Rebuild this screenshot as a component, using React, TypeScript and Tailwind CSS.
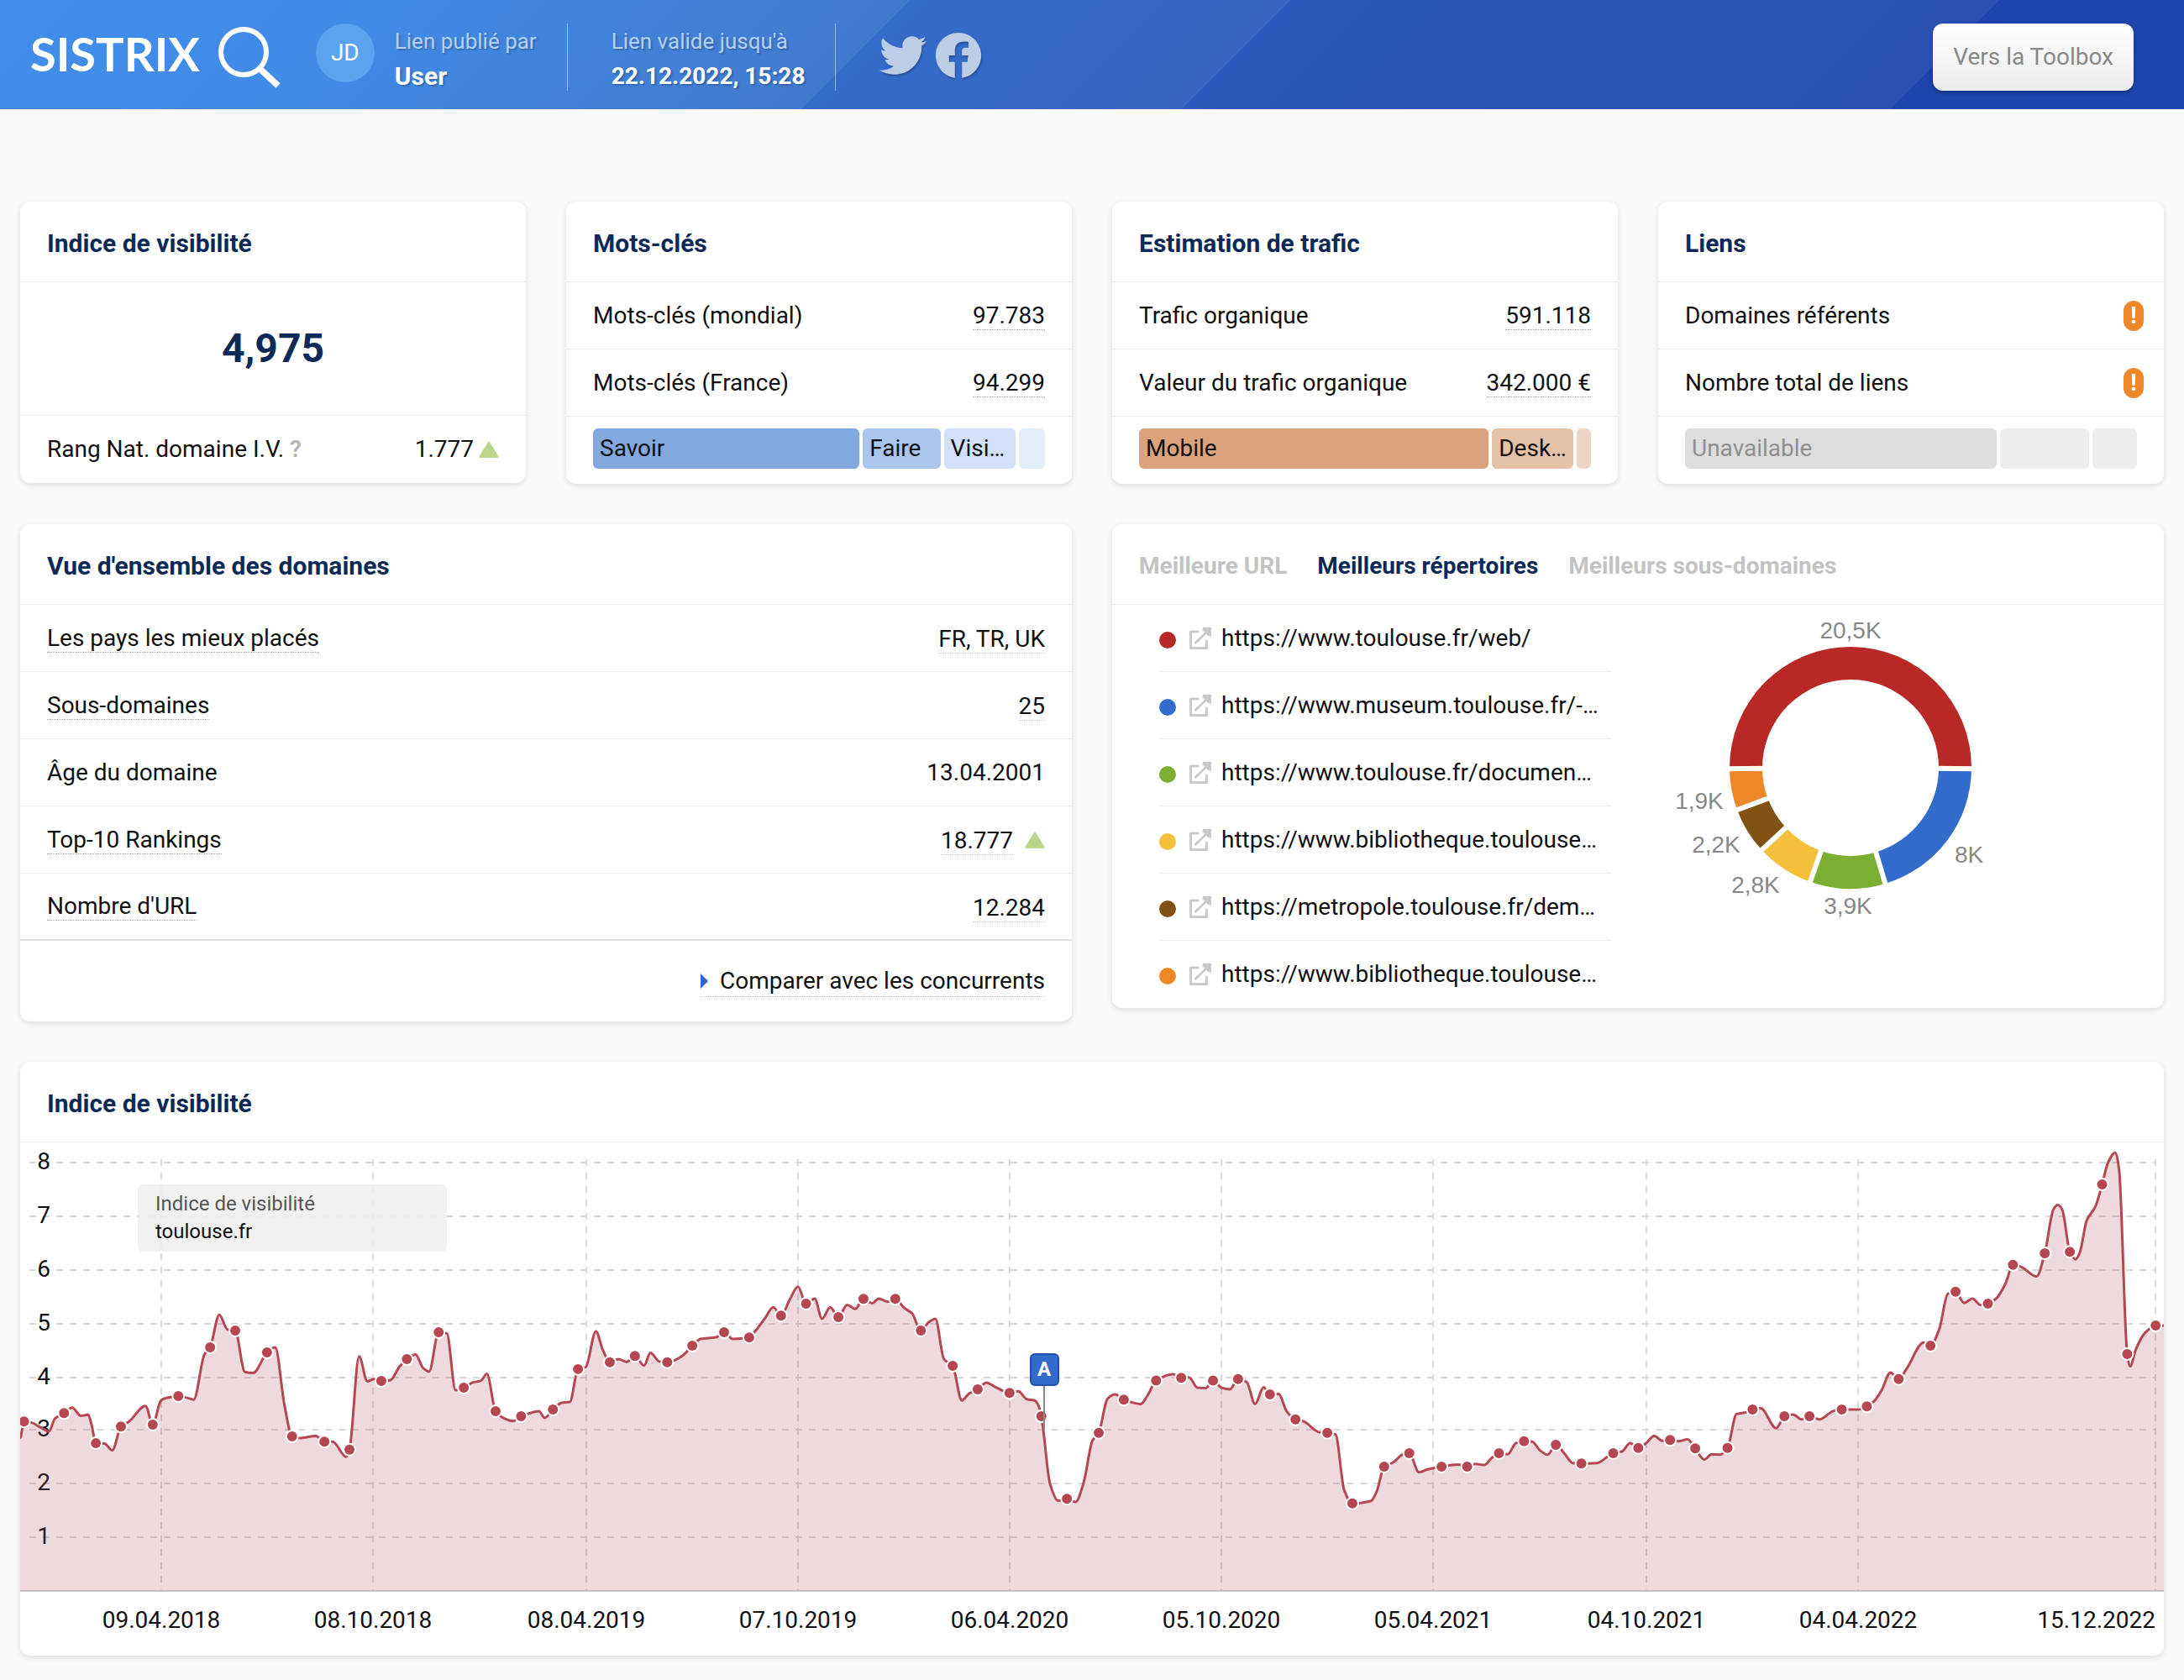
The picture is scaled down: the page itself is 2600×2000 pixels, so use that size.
import type { ReactNode } from "react";
import { FaFacebook, FaTwitter } from "react-icons/fa";

type Row = { label: string; value: string; trend?: boolean; plain?: boolean };
type Segment = { label: string; grow: number; color: string };

const keywordRows: Row[] = [
  { label: "Mots-clés (mondial)", value: "97.783" },
  { label: "Mots-clés (France)", value: "94.299" },
];

const keywordSegments: Segment[] = [
  { label: "Savoir", grow: 316, color: "bg-[#81a9e0]" },
  { label: "Faire", grow: 92, color: "bg-[#abc6ec]" },
  { label: "Visi…", grow: 85, color: "bg-[#d1e0f6]" },
  { label: "", grow: 31, color: "bg-[#e2ecfa]" },
];

const trafficRows: Row[] = [
  { label: "Trafic organique", value: "591.118" },
  { label: "Valeur du trafic organique", value: "342.000 €" },
];

const trafficSegments: Segment[] = [
  { label: "Mobile", grow: 417, color: "bg-[#dba27e]" },
  { label: "Desk…", grow: 97, color: "bg-[#e5c1a8]" },
  { label: "", grow: 17, color: "bg-[#ecd5c5]" },
];

const linkSegments: Segment[] = [
  { label: "Unavailable", grow: 371, color: "bg-[#dddddd] text-[#8f8f8f]" },
  { label: "", grow: 106, color: "bg-[#ededed]" },
  { label: "", grow: 53, color: "bg-[#ededed]" },
];

const domainRows: Row[] = [
  { label: "Les pays les mieux placés", value: "FR, TR, UK" },
  { label: "Sous-domaines", value: "25" },
  { label: "Âge du domaine", value: "13.04.2001", plain: true },
  { label: "Top-10 Rankings", value: "18.777", trend: true },
  { label: "Nombre d'URL", value: "12.284" },
];

const directories = [
  { url: "https://www.toulouse.fr/web/", dot: "bg-[#b82826]" },
  { url: "https://www.museum.toulouse.fr/-…", dot: "bg-[#326bcb]" },
  { url: "https://www.toulouse.fr/documen…", dot: "bg-[#7bae31]" },
  { url: "https://www.bibliotheque.toulouse…", dot: "bg-[#f4c03b]" },
  { url: "https://metropole.toulouse.fr/dem…", dot: "bg-[#825114]" },
  { url: "https://www.bibliotheque.toulouse…", dot: "bg-[#ed8728]" },
];

// angles are clockwise degrees from twelve o'clock
const slices = [
  { from: -90.5, to: 90.5, color: "#b82826", label: "20,5K", x: 253, y: 40 },
  { from: 90.5, to: 163.3, color: "#326bcb", label: "8K", x: 394, y: 307 },
  { from: 163.3, to: 199.5, color: "#7bae31", label: "3,9K", x: 250, y: 368 },
  { from: 199.5, to: 227.2, color: "#f4c03b", label: "2,8K", x: 140, y: 343 },
  { from: 227.2, to: 249.6, color: "#825114", label: "2,2K", x: 93, y: 295 },
  { from: 249.6, to: 269.5, color: "#ed8728", label: "1,9K", x: 73, y: 243 },
];

// [time, level, 1 when the point has a marker]
const series: number[][] = [
  [42, 978], [50, 937, 1], [66, 940], [84, 952], [102, 962], [114, 930], [133, 916, 1], [150, 902], [168, 923], [183, 920],
  [190, 945], [199, 992, 1], [217, 993], [233, 1010], [251, 950, 1], [268, 937], [302, 898], [317, 945, 1], [334, 884], [345, 878],
  [370, 873, 1], [387, 877], [402, 882], [424, 768], [436, 750, 1], [455, 668], [472, 705], [488, 708, 1], [508, 812], [525, 815],
  [554, 763, 1], [571, 750], [590, 895], [606, 975, 1], [622, 979], [655, 974], [673, 988, 1], [690, 988], [718, 1026], [725, 1008, 1],
  [745, 773], [762, 836], [775, 830], [791, 835, 1], [810, 833], [828, 800], [844, 780, 1], [862, 768], [878, 803], [890, 811],
  [910, 712, 1], [927, 715], [945, 858], [962, 852, 1], [980, 839], [998, 834], [1010, 817], [1028, 911, 1], [1047, 930], [1064, 936],
  [1081, 924, 1], [1118, 911], [1130, 928], [1147, 907, 1], [1165, 890], [1182, 888], [1199, 805, 1], [1215, 800], [1236, 710], [1250, 755],
  [1265, 788, 1], [1283, 780], [1300, 787], [1317, 772, 1], [1336, 796], [1349, 764], [1368, 786], [1384, 788, 1], [1415, 772], [1436, 746, 1],
  [1453, 729], [1485, 725], [1502, 712, 1], [1520, 729], [1554, 725, 1], [1566, 710], [1586, 678], [1604, 649], [1620, 670, 1], [1638, 630],
  [1655, 597], [1672, 640, 1], [1690, 627], [1705, 678], [1722, 649], [1739, 674, 1], [1757, 643], [1774, 653], [1791, 628, 1], [1809, 639],
  [1823, 627], [1841, 635], [1857, 628, 1], [1875, 650], [1892, 665], [1910, 708, 1], [1926, 687], [1940, 678], [1958, 780], [1976, 797, 1],
  [1995, 884], [2010, 867], [2028, 856, 1], [2046, 839], [2064, 850], [2094, 865, 1], [2112, 861], [2130, 881], [2146, 884], [2154, 897],
  [2160, 924, 1], [2178, 1095], [2195, 1137], [2213, 1132, 1], [2231, 1140], [2248, 1090], [2266, 985], [2279, 966, 1], [2297, 880], [2313, 869],
  [2331, 882, 1], [2366, 893], [2380, 872], [2398, 834, 1], [2433, 818], [2450, 827, 1], [2466, 826], [2484, 852], [2501, 853], [2516, 834, 1],
  [2534, 852], [2551, 856], [2568, 830, 1], [2586, 838], [2603, 893], [2621, 851], [2634, 869, 1], [2652, 868], [2669, 912], [2687, 932, 1],
  [2704, 937], [2736, 964], [2753, 966, 1], [2770, 970], [2788, 1110], [2805, 1144, 1], [2843, 1138], [2855, 1115], [2871, 1051, 1], [2890, 1040],
  [2910, 1020], [2923, 1017, 1], [2943, 1065], [2961, 1058], [2990, 1051, 1], [3023, 1046], [3043, 1051, 1], [3060, 1044], [3078, 1047], [3095, 1028],
  [3109, 1017, 1], [3127, 1020], [3144, 992], [3161, 987, 1], [3178, 988], [3194, 1010], [3210, 1021], [3227, 996, 1], [3246, 1020], [3262, 1042],
  [3280, 1043, 1], [3312, 1042], [3346, 1017, 1], [3364, 1013], [3381, 992], [3398, 1004, 1], [3414, 992], [3431, 974], [3448, 986], [3464, 984, 1],
  [3482, 987], [3500, 982], [3516, 1005, 1], [3535, 1033], [3550, 1020], [3567, 1021], [3583, 1004, 1], [3602, 918], [3618, 915], [3635, 907, 1],
  [3652, 904], [3684, 954], [3701, 924, 1], [3719, 920], [3737, 932], [3753, 924, 1], [3774, 932], [3802, 911], [3820, 907, 1], [3854, 907],
  [3872, 899, 1], [3887, 886], [3902, 860], [3921, 814], [3938, 830, 1], [3954, 805], [3990, 738], [4004, 746, 1], [4022, 705], [4040, 615],
  [4056, 610, 1], [4074, 638], [4091, 627], [4108, 643], [4123, 640, 1], [4142, 625], [4160, 588], [4175, 542, 1], [4192, 547], [4224, 571],
  [4241, 513, 1], [4259, 402], [4268, 391], [4277, 402], [4293, 509, 1], [4305, 528], [4314, 510], [4328, 430], [4346, 395], [4360, 339, 1],
  [4372, 285], [4387, 259], [4395, 300], [4412, 767, 1], [4418, 798], [4430, 755], [4448, 715], [4471, 695, 1], [4490, 695],
];

const yTicks = [
  { label: "8", y: 24 },
  { label: "7", y: 88 },
  { label: "6", y: 152 },
  { label: "5", y: 216 },
  { label: "4", y: 280 },
  { label: "3", y: 342 },
  { label: "2", y: 406 },
  { label: "1", y: 470 },
];

const xTicks = [
  { label: "09.04.2018", x: 168 },
  { label: "08.10.2018", x: 420 },
  { label: "08.04.2019", x: 674 },
  { label: "07.10.2019", x: 926 },
  { label: "06.04.2020", x: 1178 },
  { label: "05.10.2020", x: 1430 },
  { label: "05.04.2021", x: 1682 },
  { label: "04.10.2021", x: 1936 },
  { label: "04.04.2022", x: 2188 },
  { label: "15.12.2022", x: 2542 },
];

const BASELINE = 534;

const points = series.map(([t, level, marker]) => ({
  x: (t - 42) * 0.574,
  y: level * 0.4719 - 110,
  marker: marker === 1,
}));

// cubic curve that keeps every peak at its data point
const buildLine = () => {
  const slopes = points.map((p, i) => {
    if (i === 0 || i === points.length - 1) return 0;
    const a = points[i - 1];
    const b = points[i + 1];
    const s0 = (p.y - a.y) / (p.x - a.x);
    const s1 = (b.y - p.y) / (b.x - p.x);
    if (s0 * s1 <= 0) return 0;
    return (2 * s0 * s1) / (s0 + s1);
  });

  return points.reduce((d, p, i) => {
    if (i === 0) return `M${p.x.toFixed(1)} ${p.y.toFixed(1)}`;
    const prev = points[i - 1];
    const h = (p.x - prev.x) / 3;
    const c = [prev.x + h, prev.y + slopes[i - 1] * h, p.x - h, p.y - slopes[i] * h, p.x, p.y];
    return d + "C" + c.map((n) => n.toFixed(1)).join(" ");
  }, "");
};

const line = buildLine();

const polar = (angle: number, r: number) => {
  const rad = (angle * Math.PI) / 180;
  return [253 + r * Math.sin(rad), 194 - r * Math.cos(rad)];
};

const slicePath = (from: number, to: number) => {
  const large = to - from > 180 ? 1 : 0;
  const [x0, y0] = polar(from, 144);
  const [x1, y1] = polar(to, 144);
  const [x2, y2] = polar(to, 105);
  const [x3, y3] = polar(from, 105);
  return `M${x0} ${y0}A144 144 0 ${large} 1 ${x1} ${y1}L${x2} ${y2}A105 105 0 ${large} 0 ${x3} ${y3}Z`;
};

const Card = ({ children }: { children: ReactNode }) => (
  <section className="overflow-hidden rounded-xl bg-white shadow-[0_2px_6px_rgba(0,0,0,0.12)]">
    {children}
  </section>
);

const CardTitle = ({ children }: { children: ReactNode }) => (
  <h2 className="flex h-24 items-center border-b border-[#ececec] px-8 pt-1 text-[30px] font-bold text-[#0d2957]">
    {children}
  </h2>
);

const TrendUp = () => (
  <svg viewBox="0 0 24 20" className="h-5 w-6" aria-hidden="true">
    <path d="M11 1.2Q12 -.4 13 1.2L23.4 18Q24 20 22 20H2Q0 20 .6 18Z" fill="#bcd58b" />
  </svg>
);

const ExternalIcon = () => (
  <svg viewBox="0 0 26 26" className="size-[26px] shrink-0" fill="none" stroke="#cacaca" strokeWidth="3" aria-hidden="true">
    <path d="M11 5H1.5V24.5H20.5V15" strokeLinejoin="round" />
    <path d="M6.5 19L22 4" />
    <path d="M16 0H26V10.5H22.8L15.6 3.2Z" fill="#cacaca" stroke="none" />
  </svg>
);

const StatRow = ({ label, children }: { label: string; children: ReactNode }) => (
  <div className="flex h-20 items-center justify-between border-b border-[#ececec] px-8">
    <dt>{label}</dt>
    <dd>{children}</dd>
  </div>
);

const StatLink = ({ children }: { children: ReactNode }) => (
  <a href="#" className="border-b border-dotted border-[#aaaaaa]">
    {children}
  </a>
);

const SegmentBar = ({ segments }: { segments: Segment[] }) => (
  <div className="flex h-20 gap-1 px-8 pt-3.5">
    {segments.map((s, i) => (
      <div
        key={i}
        className={`h-12 min-w-0 basis-0 overflow-hidden rounded-md leading-12 whitespace-nowrap ${s.color}`}
        style={{ flexGrow: s.grow }}
      >
        <span className="ml-2">{s.label}</span>
      </div>
    ))}
  </div>
);

const Header = () => (
  <header className="flex h-[130px] items-start bg-[linear-gradient(135deg,#418de9_0%,#418be7_16%,#4279ce_39.7%,#346cca_39.7%,#3765c1_56.3%,#2a5abb_56.3%,#2b50b2_87.2%,#1d44ab_87.2%,#1c45ad_100%)] pt-7 pr-15 pl-9 text-white">
    <a href="#" className="flex items-start font-[Lato,sans-serif] text-[56px] leading-[72px] font-bold">
      SISTRIX
      <svg viewBox="0 0 78 78" className="ml-5 size-[78px]" fill="none" stroke="#ffffff" aria-label="Rechercher">
        <circle cx="32" cy="34" r="27" strokeWidth="6" />
        <path d="M50.5 53L73 74" strokeWidth="7.5" />
      </svg>
    </a>
    <div className="ml-10 flex size-[70px] items-center justify-center rounded-full bg-[#5ba3ee]">JD</div>
    <div className="ml-6 h-20 border-r border-white/50 pr-9 leading-[42px] text-shadow-[2px_2px_2px_rgba(0,0,0,0.2)]">
      <p className="text-[26px] text-[#b3d0f5]">Lien publié par</p>
      <p className="text-[30px] font-bold">User</p>
    </div>
    <div className="ml-13 h-20 border-r border-white/50 pr-9 leading-[42px] text-shadow-[2px_2px_2px_rgba(0,0,0,0.2)]">
      <p className="text-[26px] text-[#b3d0f5]">Lien valide jusqu'à</p>
      <p className="text-[28px] font-bold">22.12.2022, 15:28</p>
    </div>
    <nav className="mt-2.5 ml-13 flex gap-2.5 text-[56px] text-[#bdcde6] drop-shadow-[1px_2px_1px_rgba(0,0,0,0.25)]">
      <a href="#" aria-label="Twitter">
        <FaTwitter />
      </a>
      <a href="#" aria-label="Facebook">
        <FaFacebook />
      </a>
    </nav>
    <button className="ml-auto h-20 rounded-xl bg-linear-to-b from-white to-[#ececec] px-6 text-[#888888] shadow-[0_2px_4px_rgba(0,0,0,0.3)]">
      Vers la Toolbox
    </button>
  </header>
);

const VisibilityCard = () => (
  <Card>
    <CardTitle>Indice de visibilité</CardTitle>
    <p className="flex h-[159px] items-center justify-center border-b border-[#ececec] text-5xl font-bold text-[#0d2957]">
      4,975
    </p>
    <div className="flex h-20 items-center justify-between px-8">
      <span>
        Rang Nat. domaine I.V. <b className="text-[#b5b5b5]">?</b>
      </span>
      <span className="flex items-center gap-1.5">
        1.777 <TrendUp />
      </span>
    </div>
  </Card>
);

const WarningBadge = () => (
  <svg viewBox="0 0 24 36" className="-mr-2 h-9 w-6" role="img" aria-label="Indisponible">
    <rect width="24" height="36" rx="12" fill="#ed8728" />
    <path d="M9.8 7h4.4l-.5 14h-3.4z" fill="#ffffff" />
    <circle cx="12" cy="25" r="2.3" fill="#ffffff" />
  </svg>
);

const DomainCard = () => (
  <Card>
    <CardTitle>Vue d'ensemble des domaines</CardTitle>
    <dl>
      {domainRows.map((row) => (
        <div
          key={row.label}
          className="flex h-20 items-center justify-between border-b border-[#ececec] px-8 last:border-b-2 last:border-[#dddddd]"
        >
          <dt>{row.plain ? row.label : <StatLink>{row.label}</StatLink>}</dt>
          <dd className="flex items-center gap-3.5">
            {row.plain ? (
              row.value
            ) : (
              <a href="#" className="mt-1 border-b border-dotted border-[#cccccc] leading-8">
                {row.value}
              </a>
            )}
            {row.trend && <TrendUp />}
          </dd>
        </div>
      ))}
    </dl>
    <div className="flex h-24 items-center justify-end px-8">
      <a href="#" className="flex items-center border-b border-dotted border-[#cccccc] leading-9">
        <svg viewBox="0 0 9 18" className="mr-3.5 h-[18px] w-[9px]" aria-hidden="true">
          <path d="M0 0L9 9L0 18Z" fill="#2f68cd" />
        </svg>
        Comparer avec les concurrents
      </a>
    </div>
  </Card>
);

const DirectoriesCard = () => (
  <Card>
    <div className="flex h-24 items-center gap-9 border-b border-[#ececec] px-8 pt-1 text-[#c3c3c3]" role="tablist">
      <button role="tab" className="font-bold">
        Meilleure URL
      </button>
      <button role="tab" aria-selected="true" className="font-bold text-[#0d2957]">
        Meilleurs répertoires
      </button>
      <button role="tab" className="font-bold">
        Meilleurs sous-domaines
      </button>
    </div>
    <div className="grid grid-cols-2">
      <ul className="pr-8 pl-14">
        {directories.map((d, i) => (
          <li key={i} className="flex h-20 items-center border-b border-[#ececec] last:border-b-0">
            <span className={`mt-1 mr-4 size-5 shrink-0 rounded-full ${d.dot}`} />
            <ExternalIcon />
            <a href="#" className="ml-3 truncate">
              {d.url}
            </a>
          </li>
        ))}
      </ul>
      <svg viewBox="0 0 626 480" className="w-full" role="img" aria-label="Meilleurs répertoires">
        {slices.map((s) => (
          <path key={s.label} d={slicePath(s.from, s.to)} fill={s.color} />
        ))}
        {slices.map((s) => {
          const [x1, y1] = polar(s.to, 100);
          const [x2, y2] = polar(s.to, 150);
          return <line key={s.label} x1={x1} y1={y1} x2={x2} y2={y2} stroke="#ffffff" strokeWidth="6" />;
        })}
        {slices.map((s) => (
          <text
            key={s.label}
            x={s.x}
            y={s.y}
            textAnchor="middle"
            className="fill-[#888888] font-['Liberation_Sans',sans-serif] text-[28px]"
          >
            {s.label}
          </text>
        ))}
      </svg>
    </div>
  </Card>
);

const ChartCard = () => (
  <Card>
    <CardTitle>Indice de visibilité</CardTitle>
    <svg viewBox="0 0 2552 611" className="block w-full text-[28px]" role="img" aria-label="Indice de visibilité, toulouse.fr">
      {/* Grid */}
      <g stroke="#dadada" strokeWidth="2" strokeDasharray="8 8">
        {yTicks.map((t) => (
          <line key={t.label} x1="11" x2="2542" y1={t.y} y2={t.y} />
        ))}
        {xTicks.map((t) => (
          <line key={t.label} x1={t.x} x2={t.x} y1="20" y2={BASELINE} />
        ))}
      </g>
      <line x1="0" x2="2552" y1={BASELINE} y2={BASELINE} stroke="#cccccc" strokeWidth="2" />

      {/* Axis labels */}
      <g fill="#111111" textAnchor="middle">
        {yTicks.map((t) => (
          <text key={t.label} x="28" y={t.y + 8}>
            {t.label}
          </text>
        ))}
        {xTicks.map((t, i) => (
          <text key={t.label} x={t.x} y="578" textAnchor={i === xTicks.length - 1 ? "end" : "middle"}>
            {t.label}
          </text>
        ))}
      </g>

      {/* Series */}
      <path d={`${line}V${BASELINE}H0Z`} fill="#aa4453" fillOpacity="0.2" />
      <path d={line} fill="none" stroke="#b54753" strokeWidth="3" strokeLinejoin="round" />
      {points
        .filter((p) => p.marker)
        .map((p) => (
          <circle key={p.x} cx={p.x} cy={p.y} r="7" fill="#b54753" stroke="#ffffff" strokeWidth="2" />
        ))}

      {/* Event pin */}
      <line x1="1219" x2="1219" y1="290" y2="342" stroke="#888888" strokeWidth="2" />
      <rect x="1203" y="252" width="33" height="37" rx="5" fill="#326bcb" stroke="#2350a8" strokeWidth="2" />
      <text x="1219" y="278" textAnchor="middle" className="fill-white text-[24px] font-bold">
        A
      </text>

      {/* Legend */}
      <rect x="140" y="50" width="368" height="80" rx="6" fill="#eeeeee" fillOpacity="0.85" />
      <text x="161" y="81" className="fill-[#555555] text-[24px]">
        Indice de visibilité
      </text>
      <text x="161" y="114" className="fill-[#111111] text-[24px]">
        toulouse.fr
      </text>
    </svg>
  </Card>
);

const App = () => {
  return (
    <div className="min-h-screen bg-[#f9f9f9] font-[Roboto,sans-serif] text-[28px] leading-8 text-[#111111]">
      <Header />

      <main className="flex flex-col gap-12 px-6 pt-[110px] pb-7">
        <div className="grid grid-cols-4 items-start gap-12">
          <VisibilityCard />

          <Card>
            <CardTitle>Mots-clés</CardTitle>
            <dl>
              {keywordRows.map((row) => (
                <StatRow key={row.label} label={row.label}>
                  <StatLink>{row.value}</StatLink>
                </StatRow>
              ))}
            </dl>
            <SegmentBar segments={keywordSegments} />
          </Card>

          <Card>
            <CardTitle>Estimation de trafic</CardTitle>
            <dl>
              {trafficRows.map((row) => (
                <StatRow key={row.label} label={row.label}>
                  <StatLink>{row.value}</StatLink>
                </StatRow>
              ))}
            </dl>
            <SegmentBar segments={trafficSegments} />
          </Card>

          <Card>
            <CardTitle>Liens</CardTitle>
            <dl>
              <StatRow label="Domaines référents">
                <WarningBadge />
              </StatRow>
              <StatRow label="Nombre total de liens">
                <WarningBadge />
              </StatRow>
            </dl>
            <SegmentBar segments={linkSegments} />
          </Card>
        </div>

        <div className="grid grid-cols-2 items-start gap-12">
          <DomainCard />
          <DirectoriesCard />
        </div>

        <ChartCard />
      </main>
    </div>
  );
};

export default App;
